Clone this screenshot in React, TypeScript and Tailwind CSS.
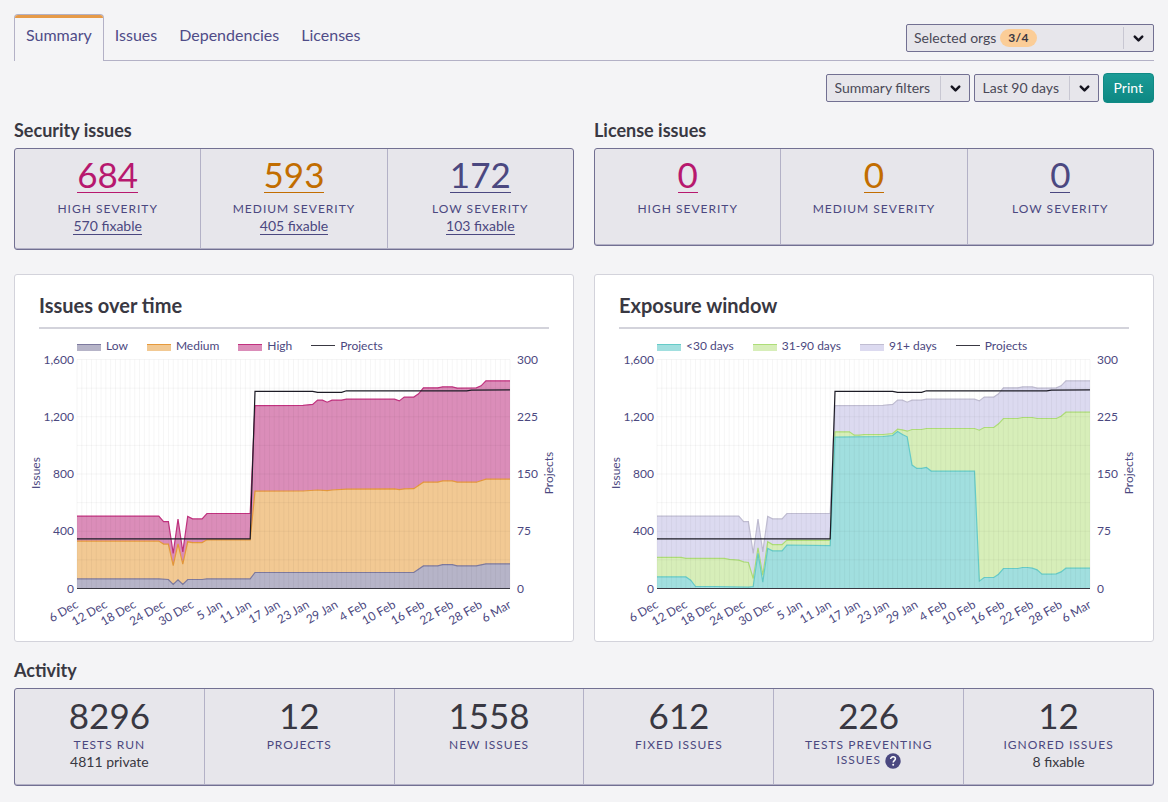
import type { ReactNode } from "react";
import { ChevronDown } from "lucide-react";

type Point = [day: number, value: number];

type Series = {
  name: string;
  fill: string;
  stroke: string;
  points: Point[];
};

const DAYS = 90;
const MAX = 1600;
const LEFT = 62;
const RIGHT = 495;
const TOP = 4.5;
const BOTTOM = 233.5;

const DATES = [
  "6 Dec", "12 Dec", "18 Dec", "24 Dec", "30 Dec", "5 Jan", "11 Jan", "17 Jan",
  "23 Jan", "29 Jan", "4 Feb", "10 Feb", "16 Feb", "22 Feb", "28 Feb", "6 Mar",
];

const TOTAL: Point[] = [
  [0, 506], [17, 506], [18, 467], [19, 467], [20, 245], [21, 485], [22, 256], [23, 503],
  [24, 486], [26, 486], [27, 524], [36, 524], [37, 1277], [47, 1279], [49, 1286], [50, 1316],
  [51, 1316], [52, 1302], [53, 1316], [55, 1316], [56, 1323], [66, 1323], [67, 1311],
  [68, 1337], [70, 1337], [71, 1360], [72, 1402], [75, 1402], [76, 1409], [78, 1409],
  [79, 1400], [83, 1402], [84, 1416], [85, 1451], [90, 1451],
];

const PROJECTS: Point[] = [
  [0, 347], [36, 347], [37, 1377], [49, 1377], [50, 1370], [55, 1370], [56, 1381],
  [81, 1381], [82, 1386], [90, 1388],
];

// Values are cumulative, listed from the top layer to the bottom one.
const ISSUES: Series[] = [
  { name: "High", fill: "#db8db9", stroke: "#c1327f", points: TOTAL },
  {
    name: "Medium",
    fill: "#f2c993",
    stroke: "#e69a3c",
    points: [
      [0, 331], [17, 331], [18, 310], [19, 310], [20, 161], [21, 312], [22, 170], [23, 326],
      [24, 321], [26, 321], [27, 340], [36, 340], [37, 680], [47, 681], [50, 688], [52, 683],
      [53, 688], [56, 694], [66, 696], [67, 690], [68, 696], [70, 697], [72, 743], [75, 743],
      [76, 752], [78, 752], [79, 743], [83, 743], [85, 764], [90, 764],
    ],
  },
  {
    name: "Low",
    fill: "#b6b4c8",
    stroke: "#7d7a9f",
    points: [
      [0, 67], [17, 67], [19, 63], [20, 28], [21, 61], [22, 28], [23, 63], [26, 63], [27, 67],
      [36, 67], [37, 112], [70, 112], [72, 158], [75, 158], [76, 167], [78, 167], [79, 158],
      [83, 158], [85, 172], [90, 172],
    ],
  },
];

const EXPOSURE: Series[] = [
  { name: "91+ days", fill: "#dcdaf0", stroke: "#c0bdd2", points: TOTAL },
  {
    name: "31-90 days",
    fill: "#d7eeb9",
    stroke: "#aedd78",
    points: [
      [0, 217], [5, 217], [6, 211], [14, 211], [15, 203], [17, 198], [18, 186], [19, 182],
      [20, 70], [21, 284], [22, 93], [23, 326], [24, 307], [26, 307], [27, 338], [36, 336],
      [37, 1095], [40, 1095], [41, 1071], [42, 1071], [43, 1076], [47, 1076], [49, 1083],
      [50, 1113], [51, 1109], [52, 1099], [53, 1111], [55, 1111], [56, 1118], [66, 1118],
      [67, 1106], [68, 1125], [70, 1125], [71, 1151], [72, 1188], [75, 1188], [76, 1195],
      [78, 1195], [79, 1188], [83, 1188], [84, 1204], [85, 1232], [90, 1232],
    ],
  },
  {
    name: "<30 days",
    fill: "#a1dfdf",
    stroke: "#66cbc8",
    points: [
      [0, 81], [6, 81], [7, 58], [8, 14], [12, 14], [19, 9], [20, 14], [21, 245], [22, 44],
      [23, 280], [24, 263], [26, 263], [27, 304], [36, 300], [37, 1057], [47, 1062], [49, 1069],
      [50, 1097], [51, 1076], [52, 1060], [53, 862], [54, 839], [55, 839], [56, 846], [57, 820],
      [66, 820], [67, 51], [68, 77], [70, 77], [71, 100], [72, 140], [75, 140], [76, 147],
      [77, 147], [78, 142], [79, 130], [80, 100], [82, 100], [83, 102], [84, 116], [85, 142],
      [90, 142],
    ],
  },
];

const x = (day: number) => LEFT + (day / DAYS) * (RIGHT - LEFT);
const y = (value: number) => BOTTOM - (value / MAX) * (BOTTOM - TOP);
const toPoints = (points: Point[]) =>
  points.map(([d, v]) => `${x(d).toFixed(1)},${y(v).toFixed(1)}`).join(" ");

function Chart({ title, series }: { title: string; series: Series[] }) {
  return (
    <section className="rounded-[3px] border border-[#d3d3db] bg-white">
      <h2 className="mx-6 border-b-2 border-[#d3d3db] pt-4 pb-2 text-xl leading-7 font-bold text-[#393842]">
        {title}
      </h2>
      <ul className="flex h-[26px] items-center gap-[19px] pt-2 pl-[62px] text-xs leading-4 text-[#4b4880]">
        {[...series].reverse().map((s) => (
          <li key={s.name} className="flex items-center gap-[5px]">
            <svg width="24" height="10" aria-hidden="true">
              <rect y="3" width="24" height="7" fill={s.fill} />
              <rect y="3" width="24" height="1" fill={s.stroke} />
            </svg>
            {s.name}
          </li>
        ))}
        <li className="flex items-center gap-[5px]">
          <svg width="24" height="10" aria-hidden="true">
            <rect y="4" width="24" height="1" fill="#393842" />
          </svg>
          Projects
        </li>
      </ul>
      <svg
        viewBox="0 0 558 286"
        className="block h-auto w-full overflow-visible"
        fontSize="12"
        fill="#4b4880"
        role="img"
        aria-label={title}
      >
        {series.map((s) => (
          <g key={s.name}>
            <polygon points={`${LEFT},${BOTTOM} ${toPoints(s.points)} ${RIGHT},${BOTTOM}`} fill={s.fill} />
            <polyline points={toPoints(s.points)} fill="none" stroke={s.stroke} strokeWidth="1.2" />
          </g>
        ))}
        <g stroke="#000" strokeOpacity="0.038">
          {Array.from({ length: DAYS / 2 + 1 }, (_, i) => (
            <line key={i} x1={x(i * 2)} x2={x(i * 2)} y1={TOP} y2={BOTTOM} />
          ))}
          {Array.from({ length: DAYS / 2 }, (_, i) => (
            <line key={i} x1={x(i * 2 + 1)} x2={x(i * 2 + 1)} y1={TOP} y2={BOTTOM} />
          ))}
          {Array.from({ length: 8 }, (_, i) => (
            <line key={i} x1={LEFT} x2={RIGHT} y1={y((i + 1) * 200)} y2={y((i + 1) * 200)} />
          ))}
        </g>
        <polyline points={toPoints(PROJECTS)} fill="none" stroke="#1d1c26" strokeWidth="1.2" />
        <line x1={LEFT} x2={RIGHT} y1={BOTTOM} y2={BOTTOM} stroke="#393842" />
        {[0, 1, 2, 3, 4].map((i) => (
          <g key={i}>
            <text x="59" y={y(i * 400) + 4} textAnchor="end">
              {(i * 400).toLocaleString("en-US")}
            </text>
            <text x="502" y={y(i * 400) + 4}>{i * 75}</text>
          </g>
        ))}
        {DATES.map((d, i) => (
          <text key={d} textAnchor="end" transform={`translate(${x(i * 6) + 2} 252) rotate(-30)`}>
            {d}
          </text>
        ))}
        <text textAnchor="middle" transform="translate(25 118) rotate(-90)">Issues</text>
        <text textAnchor="middle" transform="translate(538 118) rotate(-90)">Projects</text>
      </svg>
    </section>
  );
}

function Heading({ children }: { children: ReactNode }) {
  return <h2 className="pb-1.5 text-lg leading-6 font-bold text-[#393842]">{children}</h2>;
}

function StatBox({ children }: { children: ReactNode }) {
  return (
    <div className="flex divide-x divide-[#b3b1c6] rounded-[3px] border border-[#727092] bg-[#e7e6eb] shadow-[inset_0_-1px_0_#b3b1c6]">
      {children}
    </div>
  );
}

const SEVERITIES = [
  { label: "High severity", color: "text-[#b7186e]" },
  { label: "Medium severity", color: "text-[#c26d00]" },
  { label: "Low severity", color: "text-[#4b4880]" },
];

function SeverityStats({ counts, fixable }: { counts: number[]; fixable?: number[] }) {
  return (
    <StatBox>
      {SEVERITIES.map(({ label, color }, i) => (
        <div key={label} className="flex min-h-24 flex-1 flex-col items-center pt-2 pb-3.5">
          <a href="#issues" className={`border-b border-current text-[35px] leading-[35px] ${color}`}>
            {counts[i]}
          </a>
          <span className="pt-2 text-xs leading-[15px] tracking-[1px] text-[#4b4880] uppercase">{label}</span>
          {fixable && (
            <a href="#fixable" className="mt-0.5 border-b border-current text-sm leading-4 text-[#4b4880]">
              {fixable[i]} fixable
            </a>
          )}
        </div>
      ))}
    </StatBox>
  );
}

function HelpIcon() {
  return (
    <svg viewBox="0 0 16 16" className="-my-1 ml-1 inline-block size-4 align-middle" aria-label="Help">
      <circle cx="8" cy="8" r="7.7" fill="#4b4880" />
      <path d="M5.7 6.1c0-1.400 1-2.300 2.400-2.300s2.300.8 2.300 2c0 1.800-2.200 1.900-2.200 3.700" fill="none" stroke="#fff" strokeWidth="1.5" />
      <circle cx="8.2" cy="11.7" r="1" fill="#fff" />
    </svg>
  );
}

const ACTIVITY: { value: number; label: string; note?: string; help?: boolean }[] = [
  { value: 8296, label: "Tests run", note: "4811 private" },
  { value: 12, label: "Projects" },
  { value: 1558, label: "New issues" },
  { value: 612, label: "Fixed issues" },
  { value: 226, label: "Tests preventing issues", help: true },
  { value: 12, label: "Ignored issues", note: "8 fixable" },
];

function Chevron() {
  return (
    <span className="pointer-events-none absolute inset-y-0.5 right-0 flex w-[30px] items-center justify-center border-l border-[#c8c7d2] text-[#15141f]">
      <ChevronDown size={15} strokeWidth={4} />
    </span>
  );
}

function Select({ label, options }: { label: string; options: string[] }) {
  return (
    <div className="relative">
      <select
        aria-label={label}
        className="h-7 appearance-none rounded-[2px] border border-[#727092] bg-[#e7e6eb] pr-[38px] pl-2 text-sm leading-5 text-[#4a4957]"
      >
        {options.map((o) => (
          <option key={o}>{o}</option>
        ))}
      </select>
      <Chevron />
    </div>
  );
}

const App = () => {
  return (
    <div className="min-h-screen bg-[#f4f4f6] px-3.5 pt-3.5 pb-4 font-['Lato',sans-serif]">
      <header className="flex items-end justify-between border-b border-[#b3b1c6]">
        <nav className="-mb-px flex text-base leading-6 text-[#4f4c88]">
          <a href="#summary" className="overflow-hidden rounded-t-[4px] border border-b-0 border-[#b3b1c6] bg-[#f4f4f6]">
            <span className="block border-t-[3px] border-[#e69a48] px-[11px] pt-[5px] pb-3.5">Summary</span>
          </a>
          <a href="#issues" className="px-[11px] pt-[9px]">Issues</a>
          <a href="#dependencies" className="px-[11px] pt-[9px]">Dependencies</a>
          <a href="#licenses" className="px-[11px] pt-[9px]">Licenses</a>
        </nav>
        <button
          type="button"
          aria-haspopup="listbox"
          className="relative mb-2 flex h-7 w-62 items-center gap-1 rounded-[2px] border border-[#727092] bg-[#e7e6eb] pl-[7px] text-sm text-[#4a4957]"
        >
          Selected orgs
          <span className="rounded-full bg-[#fbcd97] px-2 text-xs leading-[18px] font-bold tracking-wide text-[#393842]">3/4</span>
          <Chevron />
        </button>
      </header>

      <div className="flex items-center justify-end gap-1 pt-3">
        <Select label="Summary filters" options={["Summary filters"]} />
        <Select label="Date range" options={["Last 90 days"]} />
        <button type="button" className="h-[30px] rounded-[4px] border border-[#0f8a85] bg-linear-to-b from-[#1b9b96] to-[#0d8883] px-2.5 text-sm text-white">
          Print
        </button>
      </div>

      <main>
        <div className="grid grid-cols-2 items-start gap-x-5 pt-[15px]">
          <section>
            <Heading>Security issues</Heading>
            <SeverityStats counts={[684, 593, 172]} fixable={[570, 405, 103]} />
          </section>
          <section>
            <Heading>License issues</Heading>
            <SeverityStats counts={[0, 0, 0]} />
          </section>
        </div>

        <div className="grid grid-cols-2 gap-x-5 pt-6">
          <Chart title="Issues over time" series={ISSUES} />
          <Chart title="Exposure window" series={EXPOSURE} />
        </div>

        <section className="pt-4">
          <Heading>Activity</Heading>
          <StatBox>
            {ACTIVITY.map(({ value, label, note, help }, i) => (
              <div key={i} className="flex min-h-24 flex-1 flex-col items-center pt-2 text-center text-[#393842]">
                <span className="text-[35px] leading-9">{value}</span>
                <span className="max-w-40 pt-1 text-xs leading-[15px] tracking-[1px] text-[#4b4880] uppercase">
                  {label}
                  {help && <HelpIcon />}
                </span>
                {note && <span className="pt-0.5 text-sm leading-4">{note}</span>}
              </div>
            ))}
          </StatBox>
        </section>
      </main>
    </div>
  );
};

export default App;
